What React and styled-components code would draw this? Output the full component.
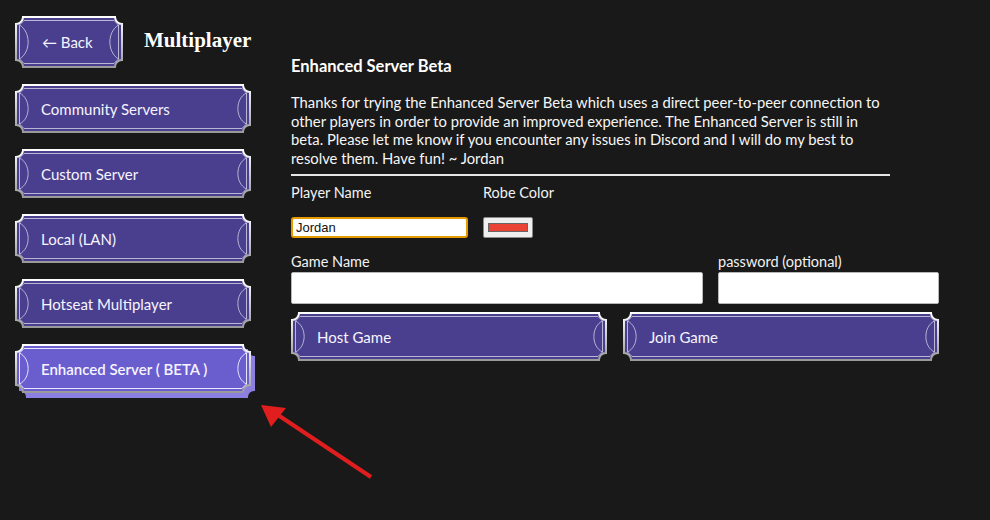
import React, { useId } from "react";
import styled, { createGlobalStyle } from "styled-components";

const Global = createGlobalStyle`
  html, body { margin: 0; padding: 0; background: #191919; }
  body { width: 990px; height: 520px; overflow: hidden; font-family: Lato, "Open Sans", sans-serif; color: #f2f2f2; }
  * { box-sizing: border-box; }
`;

const Page = styled.div`
  position: relative;
  display: flex;
  gap: 40px;
  padding: 16px 0 0 15px;
  height: 520px;
`;

const Sidebar = styled.div`
  width: 236px;
  display: flex;
  flex-direction: column;
`;

const Header = styled.div`
  display: flex;
  align-items: center;
  gap: 21px;
`;

const PageTitle = styled.h1`
  margin: 0 0 4px;
  font-family: "Liberation Serif", serif;
  font-weight: bold;
  font-size: 21px;
  color: #fff;
`;

const Nav = styled.div`
  display: flex;
  flex-direction: column;
  gap: 16px;
  margin-top: 16px;
`;

const FrameBtn = styled.button`
  position: relative;
  width: ${(p) => p.$w}px;
  height: ${(p) => p.$h}px;
  padding: 0 0 0 ${(p) => p.$pad}px;
  border: none;
  background: transparent;
  display: flex;
  align-items: center;
  font-family: Lato, "Open Sans", sans-serif;
  font-size: 15px;
  font-weight: ${(p) => (p.$active ? 600 : 400)};
  color: #f6f4ff;
  text-align: left;
  cursor: pointer;
  flex: none;
`;

const FrameSvg = styled.svg`
  position: absolute;
  left: 0;
  top: 0;
  overflow: visible;
  filter: ${(p) => (p.$active ? "drop-shadow(4px 5px 0 #8b80e2)" : "none")};
`;

const Label = styled.span`
  position: relative;
`;

function Frame({ w, h, active }) {
  const id = useId().replace(/:/g, "");
  const r = 8;
  const fill = active ? "#6a5ecf" : "#4a3f8e";
  const outer = `M ${r} 1 L ${w - r} 1 A ${r - 1} ${r - 1} 0 0 0 ${w - 1} ${r} L ${w - 1} ${h - r} A ${r - 1} ${r - 1} 0 0 0 ${w - r} ${h - 1} L ${r} ${h - 1} A ${r - 1} ${r - 1} 0 0 0 1 ${h - r} L 1 ${r} A ${r - 1} ${r - 1} 0 0 0 ${r} 1 Z`;
  const line = active ? "#e8e6ff" : "#b9b5d6";
  const m = h / 2;
  return (
    <FrameSvg width={w} height={h} $active={active}>
      <defs>
        <linearGradient id={id} x1="0" y1="0" x2="0" y2="1">
          <stop offset="0" stopColor="#ffffff" />
          <stop offset="1" stopColor="#9a9a9a" />
        </linearGradient>
      </defs>
      <path d={outer} fill={fill} stroke={`url(#${id})`} strokeWidth="2" />
      <g fill="none" stroke={line} strokeWidth="1">
        <line x1={r + 1} y1="4.5" x2={w - r - 1} y2="4.5" />
        <line x1={r + 1} y1={h - 4.5} x2={w - r - 1} y2={h - 4.5} />
        <line x1="4.5" y1={r + 1} x2="4.5" y2={h - r - 1} />
        <line x1={w - 4.5} y1={r + 1} x2={w - 4.5} y2={h - r - 1} />
        <path d={`M 4.5 ${r + 1} C 16 ${m - 10}, 16 ${m + 10}, 4.5 ${h - r - 1}`} />
        <path d={`M ${w - 4.5} ${r + 1} C ${w - 16} ${m - 10}, ${w - 16} ${m + 10}, ${w - 4.5} ${h - r - 1}`} />
        <path d={`M ${r + 1} 4.5 L 4.5 ${r + 1}`} />
        <path d={`M ${w - r - 1} 4.5 L ${w - 4.5} ${r + 1}`} />
        <path d={`M ${r + 1} ${h - 4.5} L 4.5 ${h - r - 1}`} />
        <path d={`M ${w - r - 1} ${h - 4.5} L ${w - 4.5} ${h - r - 1}`} />
      </g>
    </FrameSvg>
  );
}

function FancyButton({ w, h = 49, pad = 26, active, children }) {
  return (
    <FrameBtn $w={w} $h={h} $pad={pad} $active={active}>
      <Frame w={w} h={h} active={active} />
      <Label>{children}</Label>
    </FrameBtn>
  );
}

const Content = styled.div`
  width: 648px;
  padding-top: 40px;
`;

const SectionTitle = styled.h2`
  margin: 0;
  font-size: 16.5px;
  line-height: 20px;
  font-weight: bold;
  color: #fff;
`;

const Paragraph = styled.p`
  margin: 17px 0 0;
  width: 600px;
  font-size: 14.8px;
  line-height: 18.5px;
  color: #f6f6f6;
`;

const Rule = styled.hr`
  margin: 7px 0 0;
  width: 599px;
  height: 2px;
  border: none;
  background: #e6e6e6;
`;

const Row = styled.div`
  display: flex;
  gap: ${(p) => p.$gap || 0}px;
  margin-top: ${(p) => p.$mt || 0}px;
`;

const Field = styled.div`
  width: ${(p) => p.$w}px;
  display: flex;
  flex-direction: column;
  gap: ${(p) => p.$gap || 0}px;
`;

const FieldLabel = styled.label`
  font-size: 14.5px;
  line-height: 18px;
  color: #f2f2f2;
`;

const NameInput = styled.input`
  width: 177px;
  height: 21px;
  border: 2px solid #e39b00;
  border-radius: 3px;
  padding: 0 3px;
  font-family: "Liberation Sans", Arial, sans-serif;
  font-size: 13px;
  color: #111;
  background: #fff;
  outline: none;
`;

const ColorBox = styled.div`
  width: 50px;
  height: 21px;
  border: 1px solid #8a8a8a;
  border-radius: 2px;
  background: #efefef;
  display: flex;
  align-items: center;
  justify-content: center;
`;

const Swatch = styled.div`
  width: 40px;
  height: 9px;
  background: #ea4335;
  border: 1px solid #666;
`;

const TextInput = styled.input`
  width: 100%;
  height: 32px;
  border: 1px solid #b8b8b8;
  border-radius: 2px;
  background: #fff;
  outline: none;
`;

const Arrow = styled.svg`
  position: absolute;
  left: 250px;
  top: 395px;
`;

export default function App() {
  return (
    <>
      <Global />
      <Page>
        <Sidebar>
          <Header>
            <FancyButton w={108} h={52} pad={27}>← Back</FancyButton>
            <PageTitle>Multiplayer</PageTitle>
          </Header>
          <Nav>
            <FancyButton w={236}>Community Servers</FancyButton>
            <FancyButton w={236}>Custom Server</FancyButton>
            <FancyButton w={236}>Local (LAN)</FancyButton>
            <FancyButton w={236}>Hotseat Multiplayer</FancyButton>
            <FancyButton w={236} active>Enhanced Server ( BETA )</FancyButton>
          </Nav>
        </Sidebar>
        <Content>
          <SectionTitle>Enhanced Server Beta</SectionTitle>
          <Paragraph>
            Thanks for trying the Enhanced Server Beta which uses a direct peer-to-peer connection to other players in order to provide an improved experience. The Enhanced Server is still in beta. Please let me know if you encounter any issues in Discord and I will do my best to resolve them. Have fun! ~ Jordan
          </Paragraph>
          <Rule />
          <Row $mt={8}>
            <Field $w={192} $gap={15}>
              <FieldLabel>Player Name</FieldLabel>
              <NameInput defaultValue="Jordan" />
            </Field>
            <Field $w={80} $gap={15}>
              <FieldLabel>Robe Color</FieldLabel>
              <ColorBox><Swatch /></ColorBox>
            </Field>
          </Row>
          <Row $mt={15} $gap={15}>
            <Field $w={412} $gap={1}>
              <FieldLabel>Game Name</FieldLabel>
              <TextInput />
            </Field>
            <Field $w={221} $gap={1}>
              <FieldLabel>password (optional)</FieldLabel>
              <TextInput />
            </Field>
          </Row>
          <Row $mt={8} $gap={16}>
            <FancyButton w={316}>Host Game</FancyButton>
            <FancyButton w={316}>Join Game</FancyButton>
          </Row>
        </Content>
        <Arrow width="130" height="90" viewBox="0 0 130 90">
          <line x1="121" y1="82" x2="25" y2="18" stroke="#e01e1e" strokeWidth="4" />
          <polygon points="11,10 36,13 21,32" fill="#e01e1e" />
        </Arrow>
      </Page>
    </>
  );
}
